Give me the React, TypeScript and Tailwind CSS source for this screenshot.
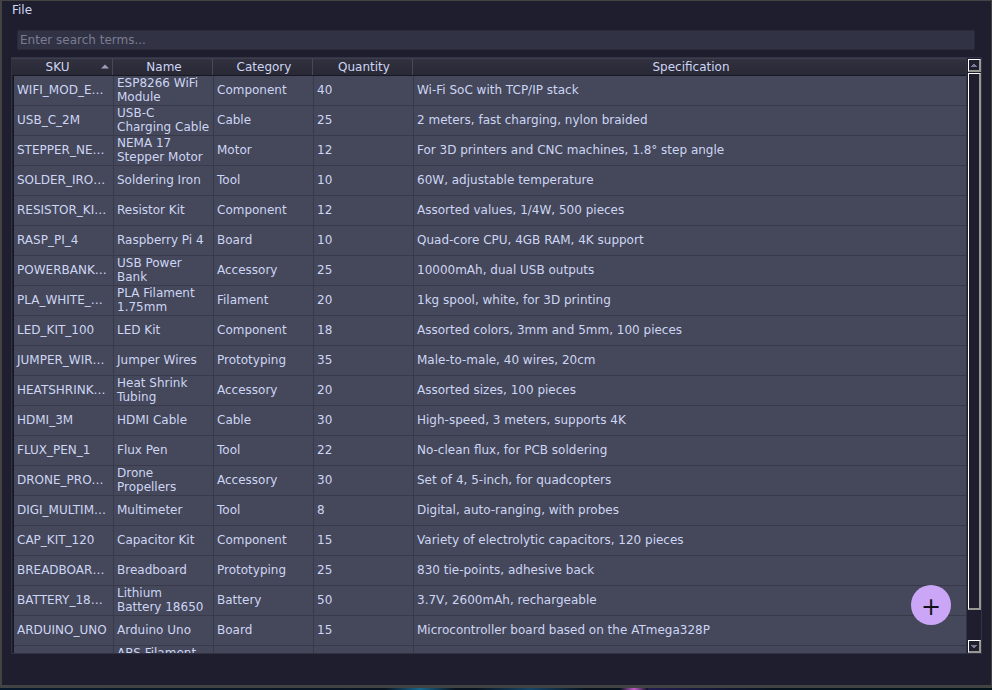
const rows: [string, string[], string, string, string][] = [
  ["WIFI_MOD_E…", ["ESP8266 WiFi", "Module"], "Component", "40", "Wi-Fi SoC with TCP/IP stack"],
  ["USB_C_2M", ["USB-C", "Charging Cable"], "Cable", "25", "2 meters, fast charging, nylon braided"],
  ["STEPPER_NE…", ["NEMA 17", "Stepper Motor"], "Motor", "12", "For 3D printers and CNC machines, 1.8° step angle"],
  ["SOLDER_IRO…", ["Soldering Iron"], "Tool", "10", "60W, adjustable temperature"],
  ["RESISTOR_KI…", ["Resistor Kit"], "Component", "12", "Assorted values, 1/4W, 500 pieces"],
  ["RASP_PI_4", ["Raspberry Pi 4"], "Board", "10", "Quad-core CPU, 4GB RAM, 4K support"],
  ["POWERBANK…", ["USB Power", "Bank"], "Accessory", "25", "10000mAh, dual USB outputs"],
  ["PLA_WHITE_…", ["PLA Filament", "1.75mm"], "Filament", "20", "1kg spool, white, for 3D printing"],
  ["LED_KIT_100", ["LED Kit"], "Component", "18", "Assorted colors, 3mm and 5mm, 100 pieces"],
  ["JUMPER_WIR…", ["Jumper Wires"], "Prototyping", "35", "Male-to-male, 40 wires, 20cm"],
  ["HEATSHRINK…", ["Heat Shrink", "Tubing"], "Accessory", "20", "Assorted sizes, 100 pieces"],
  ["HDMI_3M", ["HDMI Cable"], "Cable", "30", "High-speed, 3 meters, supports 4K"],
  ["FLUX_PEN_1", ["Flux Pen"], "Tool", "22", "No-clean flux, for PCB soldering"],
  ["DRONE_PRO…", ["Drone", "Propellers"], "Accessory", "30", "Set of 4, 5-inch, for quadcopters"],
  ["DIGI_MULTIM…", ["Multimeter"], "Tool", "8", "Digital, auto-ranging, with probes"],
  ["CAP_KIT_120", ["Capacitor Kit"], "Component", "15", "Variety of electrolytic capacitors, 120 pieces"],
  ["BREADBOAR…", ["Breadboard"], "Prototyping", "25", "830 tie-points, adhesive back"],
  ["BATTERY_18…", ["Lithium", "Battery 18650"], "Battery", "50", "3.7V, 2600mAh, rechargeable"],
  ["ARDUINO_UNO", ["Arduino Uno"], "Board", "15", "Microcontroller board based on the ATmega328P"],
  ["", ["ABS Filament", "\u00a0"], "", "", ""],
];

const headers = ["SKU", "Name", "Category", "Quantity", "Specification"];
const bevel = "border-t border-l border-r-2 border-b-2 border-t-white border-l-white border-r-[#999994] border-b-[#999994] bg-[#1e1e2e]";

function Header() {
  return (
    <div className="grid h-[18px] shrink-0 grid-cols-[101px_100px_100px_100px_1fr] border-t border-b border-t-[#3d3e4f] border-b-[#181825] bg-linear-to-b from-[#31313f] to-[#292835]">
      {headers.map((h, i) => (
        <div key={h} className={`flex h-[16px] items-center justify-center leading-[16px] ${i < 4 ? "border-r border-[#45475a]" : ""}`}>
          {i === 0 ? (
            <>
              <span className="ml-[2px] flex-1 text-center">{h}</span>
              <svg className="mr-[3px] mb-[2px]" width="8" height="5" viewBox="0 0 8 5">
                <path d="M0 4.5 L4 .5 L8 4.5Z" fill="#9b9fbd" />
              </svg>
            </>
          ) : (
            <span className="pl-[3px]">{h}</span>
          )}
        </div>
      ))}
    </div>
  );
}

function Cell({ lines, last = false }: { lines: string[]; last?: boolean }) {
  return (
    <div className={`flex flex-col justify-center overflow-hidden border-b border-[#383a4b] pb-px pl-[3px] leading-[14px] whitespace-nowrap ${last ? "" : "border-r"}`}>
      {lines.map((l) => (
        <span key={l} className="h-[14px] shrink-0">{l}</span>
      ))}
    </div>
  );
}

export default function App() {
  return (
    <div className="flex h-[690px] w-[992px] flex-col overflow-hidden bg-[#434344] text-[12px] text-[#cdd6f4] [font-family:'DejaVu_Sans',sans-serif]">
      <div className="relative mt-px mr-px ml-[2px] flex h-[684px] flex-col bg-[#1e1e2e]">
        <div className="h-[29px] pt-[1px] pl-[10px] leading-[16px]">File</div>
        <div className="mr-[16px] ml-[15px] h-[20px] rounded-[2px] border border-[#2b2b3c] bg-[#313244] pl-[2px] leading-[18px] text-[#7a7d92]">Enter search terms...</div>
        <div className="mt-[7px] ml-[9px] flex h-[597px] w-[971px] border border-[#313244]">
          <div className="flex w-[955px] flex-col overflow-hidden border-r border-[#313244]">
            <Header />
            <div className="ml-px flex-1 overflow-hidden border-l border-[#181825] bg-[#45475a]">
              {rows.map((r) => (
                <div key={r[1][0]} className="grid h-[30px] grid-cols-[100px_100px_100px_100px_1fr]">
                  <Cell lines={[r[0]]} />
                  <Cell lines={r[1]} />
                  <Cell lines={[r[2]]} />
                  <Cell lines={[r[3]]} />
                  <Cell lines={[r[4]]} last />
                </div>
              ))}
            </div>
          </div>
          <div className="flex flex-1 flex-col pt-px pl-px">
            <div className={`flex h-[13px] items-center justify-center ${bevel}`}>
              <svg width="6" height="3" viewBox="0 0 6 3" shapeRendering="crispEdges">
                <path d="M2 0h2v1h1v1h1v1H0V2h1V1h1Z" fill="#777b96" />
              </svg>
            </div>
            <div className={`mt-px h-[537px] ${bevel}`} />
            <div className={`mt-[30px] flex h-[13px] items-center justify-center ${bevel}`}>
              <svg width="6" height="3" viewBox="0 0 6 3" shapeRendering="crispEdges">
                <path d="M0 0h6v1H5v1H4v1H2V2H1V1H0Z" fill="#777b96" />
              </svg>
            </div>
          </div>
        </div>
        <button className="absolute top-[584px] left-[909px] flex h-[40px] w-[40px] items-center justify-center rounded-full bg-[#cba6f7] pt-[4px] text-[24px] leading-[36px] text-[#11111b]">+</button>
      </div>
      <div className="mt-[3px] h-[2px] bg-linear-to-r from-[#071a2d] via-[#08121f] to-[#02131c]">
        <div className="ml-[385px] flex h-full">
          <div className="w-[70px] bg-linear-to-r from-transparent via-[#17688e] to-transparent" />
          <div className="ml-[20px] w-[110px] bg-linear-to-r from-transparent via-[#154569] to-transparent" />
          <div className="ml-[35px] w-[28px] bg-linear-to-r from-transparent via-[#c25bc8] to-transparent" />
          <div className="w-[130px] bg-linear-to-r from-[#211b50] to-transparent" />
        </div>
      </div>
    </div>
  );
}
